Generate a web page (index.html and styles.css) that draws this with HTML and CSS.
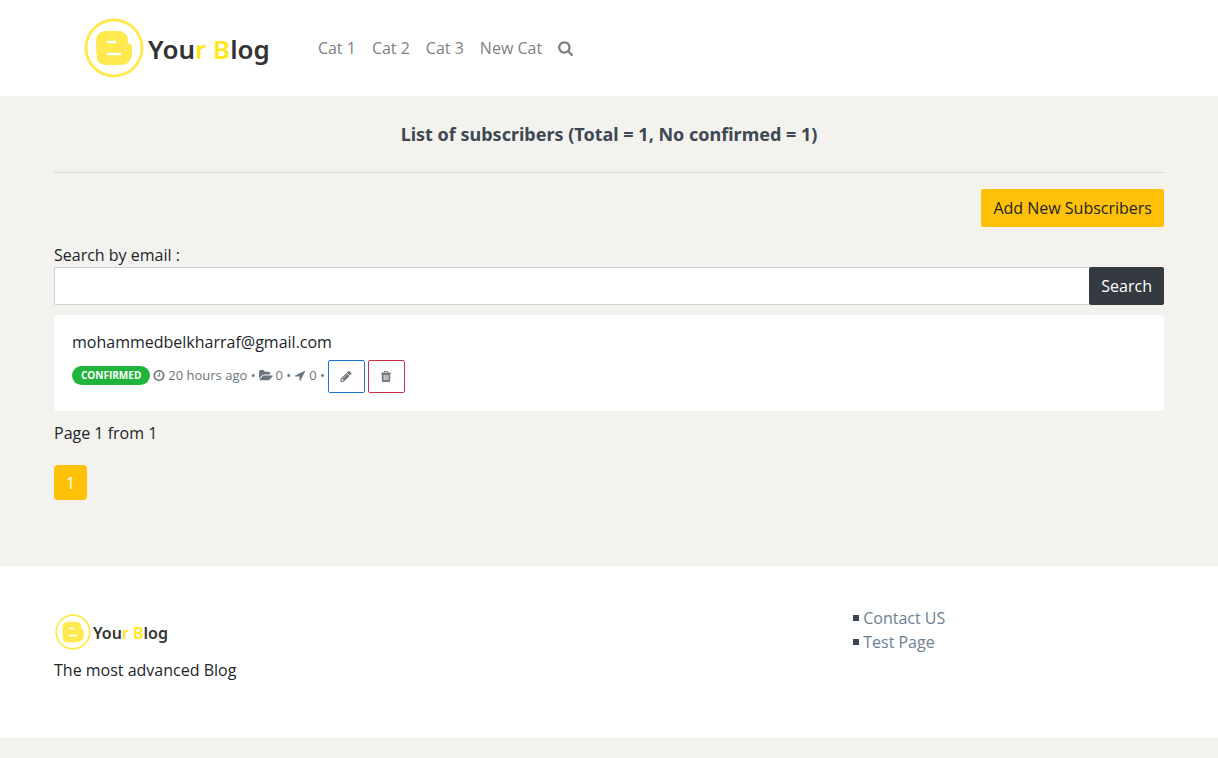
FILE: index.html
```html
<!DOCTYPE html>
<html lang="en">
<head>
    <meta charset="UTF-8">
    <meta name="viewport" content="width=device-width, initial-scale=1.0">
    <title>List of subscribers</title>
    <link rel="stylesheet" href="styles.css">
</head>
<body>
    <header class="header">
        <nav class="container navbar">
            <a class="logo" href="#">
                <svg class="logo-icon" viewBox="0 0 60 60" aria-hidden="true">
                    <circle cx="30" cy="30" r="28" fill="none" stroke="#ffe94f" stroke-width="3"/>
                    <path d="M23 13h11q10 0 10 10 0 3 2 3 2 0 2 3v6q0 12-12 12H23q-10 0-10-7v-2l-1-5q1-3 0-6V24q0-11 11-11z" fill="#ffe94f"/>
                    <path d="M24 24h7M24 36h12" stroke="#fff" stroke-width="2.500" stroke-linecap="round"/>
                </svg>
                <span class="logo-text">You<span class="accent">r B</span>log</span>
            </a>
            <ul class="nav">
                <li><a href="#">Cat 1</a></li>
                <li><a href="#">Cat 2</a></li>
                <li><a href="#">Cat 3</a></li>
                <li><a href="#">New Cat</a></li>
                <li>
                    <a href="#" aria-label="Search">
                        <svg class="icon-search" viewBox="0 0 1664 1792" aria-hidden="true"><path d="M1152 832q0-185-131.500-316.500T704 384 387.500 515.500 256 832t131.500 316.500T704 1280t316.500-131.500T1152 832zm512 832q0 52-38 90t-90 38q-54 0-90-38l-343-342q-179 124-399 124-143 0-273.500-55.500t-225-150-150-225T0 832t55.500-273.500 150-225 225-150T704 128t273.500 55.500 225 150 150 225T1408 832q0 220-124 399l343 343q37 37 37 90z"/></svg>
                    </a>
                </li>
            </ul>
        </nav>
    </header>

    <main class="container main">
        <h1>List of subscribers (Total = 1, No confirmed = 1)</h1>
        <hr>
        <div class="actions">
            <button class="btn btn-warning" type="button">Add New Subscribers</button>
        </div>
        <form>
            <label for="email">Search by email :</label>
            <div class="input-group">
                <input type="text" id="email" name="email">
                <button class="btn btn-dark" type="submit">Search</button>
            </div>
        </form>

        <div class="card">
            <div class="email">mohammedbelkharraf@gmail.com</div>
            <div class="meta">
                <span class="badge">CONFIRMED</span>
                <svg class="icon" viewBox="0 0 1536 1792" aria-hidden="true"><path d="M896 544v448q0 14-9 23t-23 9H544q-14 0-23-9t-9-23v-64q0-14 9-23t23-9h224V544q0-14 9-23t23-9h64q14 0 23 9t9 23zm416 352q0-148-73-273t-198-198-273-73-273 73-198 198-73 273 73 273 198 198 273 73 273-73 198-198 73-273zm224 0q0 209-103 385.500T1153.500 1561 768 1664t-385.500-103T103 1281.500 0 896t103-385.500T382.500 231 768 128t385.500 103T1433 510.500 1536 896z"/></svg>
                <span>20 hours ago •</span>
                <svg class="icon icon-wide" viewBox="0 0 1920 1792" aria-hidden="true"><path d="M1879 952q0 31-31 66l-336 396q-43 51-120.500 86.500T1248 1536H160q-34 0-60.500-13T73 1480q0-31 31-66l336-396q43-51 120.500-86.500T704 896h1088q34 0 60.500 13t26.500 43zm-343-344v160H704q-94 0-197 47.500T343 935L6 1331l-5 6q0-4-.5-12.500T0 1312V352q0-92 66-158t158-66h320q92 0 158 66t66 158v32h544q92 0 158 66t66 158z"/></svg>
                <span>0 •</span>
                <svg class="icon" viewBox="0 0 1408 1792" aria-hidden="true"><path d="M1401 349l-640 1280q-17 35-57 35-5 0-15-2-22-5-35.500-22.500T640 1600v-576H64q-22 0-39.500-13.500T2 975t4-42 29-30L1315 263q13-7 29-7 27 0 45 19 15 14 18.500 34.500T1401 349z"/></svg>
                <span>0 •</span>
                <button class="btn-outline edit" type="button" aria-label="Edit">
                    <svg class="icon" viewBox="0 0 1536 1792" aria-hidden="true"><path d="M363 1536l91-91-235-235-91 91v107h128v128h107zm523-928q0-22-22-22-10 0-17 7l-542 542q-7 7-7 17 0 22 22 22 10 0 17-7l542-542q7-7 7-17zm-54-192l416 416-832 832H0v-416zm683 96q0 53-37 90l-166 166-416-416 166-165q36-38 90-38 53 0 91 38l235 234q37 39 37 91z"/></svg>
                </button>
                <button class="btn-outline delete" type="button" aria-label="Delete">
                    <svg class="icon" viewBox="0 0 1408 1792" aria-hidden="true"><path fill-rule="evenodd" d="M512 1376V672q0-32-32-32h-64q-32 0-32 32v704q0 32 32 32h64q32 0 32-32zm256 0V672q0-32-32-32h-64q-32 0-32 32v704q0 32 32 32h64q32 0 32-32zm256 0V672q0-32-32-32h-64q-32 0-32 32v704q0 32 32 32h64q32 0 32-32zM480 384h448l-48-117q-7-9-17-11H546q-10 2-17 11zm928 32v64q0 32-32 32h-96v948q0 83-47 143.500t-113 60.500H288q-66 0-113-58.500T128 1464V512H32q-32 0-32-32v-64q0-32 32-32h309l70-167q15-37 54-63t79-26h320q40 0 79 26t54 63l70 167h309q32 0 32 32z"/></svg>
                </button>
            </div>
        </div>

        <p class="page-info">Page 1 from 1</p>
        <a class="page-link" href="#">1</a>
    </main>

    <footer class="footer">
        <div class="container footer-row">
            <div class="footer-about">
                <a class="logo logo-small" href="#">
                    <svg class="logo-icon" viewBox="0 0 60 60" aria-hidden="true">
                        <circle cx="30" cy="30" r="28" fill="none" stroke="#ffe94f" stroke-width="3"/>
                        <path d="M23 13h11q10 0 10 10 0 3 2 3 2 0 2 3v6q0 12-12 12H23q-10 0-10-7v-2l-1-5q1-3 0-6V24q0-11 11-11z" fill="#ffe94f"/>
                        <path d="M24 24h7M24 36h12" stroke="#fff" stroke-width="2.500" stroke-linecap="round"/>
                    </svg>
                    <span class="logo-text">You<span class="accent">r B</span>log</span>
                </a>
                <p>The most advanced Blog</p>
            </div>
            <ul class="footer-links">
                <li><a href="#">Contact US</a></li>
                <li><a href="#">Test Page</a></li>
            </ul>
        </div>
    </footer>
</body>
</html>
```

FILE: styles.css
```css
* {
    box-sizing: border-box;
}
body {
    margin: 0;
    background-color: #f3f2ee;
    color: #212529;
    font-family: "Open Sans", "Noto Sans", sans-serif;
    font-size: 16px;
    line-height: 24px;
}
a {
    text-decoration: none;
}
ul {
    list-style: none;
    margin: 0;
    padding: 0;
}
svg {
    fill: currentColor;
}
.container {
    width: 100%;
    max-width: 1140px;
    margin: 0 auto;
    padding: 0 15px;
}
.header {
    background-color: #fff;
}
.navbar {
    display: flex;
    align-items: center;
    gap: 48px;
    height: 96px;
    padding: 0 45px;
}
.logo {
    display: flex;
    align-items: center;
    gap: 4px;
    color: #333;
}
.logo-icon {
    width: 60px;
    height: 60px;
}
.logo-text {
    padding-top: 2px;
    font-family: "Noto Sans", sans-serif;
    font-size: 26px;
    font-weight: 600;
    line-height: 36px;
}
.accent {
    color: #ffe71a;
}
.nav {
    display: flex;
    align-items: center;
    gap: 16px;
}
.nav a {
    color: #7f7f7f;
}
.icon-search {
    display: block;
    width: 15px;
    height: 16px;
}
.main {
    padding-bottom: 66px;
}
h1 {
    margin: 0;
    padding: 24px 0 23px;
    color: #3d4852;
    font-family: "Noto Sans", sans-serif;
    font-size: 18px;
    font-weight: 700;
    line-height: 29px;
    text-align: center;
}
hr {
    margin: 0 0 16px;
    border: 0;
    border-top: 1px solid #dad9d6;
}
.actions {
    display: flex;
    justify-content: flex-end;
    margin-bottom: 16px;
}
.btn {
    height: 38px;
    padding: 0 12px;
    border: 0;
    border-radius: 2px;
    font: inherit;
    cursor: pointer;
}
.btn-warning {
    background-color: #ffc107;
    color: #212529;
}
.btn-dark {
    background-color: #343a40;
    color: #fff;
}
label {
    display: block;
}
.input-group {
    display: flex;
}
.input-group input {
    flex: 1;
    min-width: 0;
    height: 38px;
    padding: 6px 12px;
    border: 1px solid #ced4da;
    border-right: 0;
    border-radius: 2px 0 0 2px;
    font: inherit;
}
.card {
    margin: 10px 0;
    padding: 15px 18px 18px;
    border-radius: 4px;
    background-color: #fff;
}
.meta {
    display: flex;
    align-items: center;
    gap: 3px;
    margin-top: 6px;
    color: #6c757d;
    font-size: 13px;
}
.meta > span,
.meta > svg {
    margin-bottom: 3px;
}
.badge {
    padding: 0 9px;
    border-radius: 10px;
    background-color: #21b43c;
    color: #fff;
    font-size: 10px;
    font-weight: 700;
    line-height: 19px;
}
.icon {
    width: 12px;
    height: 13px;
}
.icon-wide {
    width: 14px;
}
.btn-outline {
    display: flex;
    align-items: center;
    justify-content: center;
    width: 37px;
    height: 33px;
    padding: 0;
    border: 1px solid;
    border-radius: 2px;
    background-color: #fff;
    cursor: pointer;
}
.btn-outline .icon {
    color: #6c757d;
}
.edit {
    border-color: #1976d2;
}
.delete {
    border-color: #c9304c;
}
.page-info {
    margin: 0 0 20px;
}
.page-link {
    display: inline-block;
    padding: 6px 12px 5px;
    border-radius: 4px;
    background-color: #ffc107;
    color: #fff;
}
.footer {
    margin-bottom: 20px;
    padding: 40px 0 56px;
    background-color: #fff;
}
.footer-row {
    display: flex;
}
.footer-about {
    flex: 1;
}
.footer-about p {
    margin: 0;
}
.logo-small {
    gap: 2px;
    height: 52px;
    padding-left: 1px;
}
.logo-small .logo-icon {
    width: 36px;
    height: 36px;
}
.logo-small .logo-text {
    font-size: 16px;
    line-height: 24px;
}
.footer-links {
    width: 28%;
}
.footer-links li {
    display: flex;
    align-items: center;
    gap: 4px;
}
.footer-links li::before {
    content: "";
    width: 6px;
    height: 6px;
    background-color: #3d4852;
}
.footer-links a {
    color: #6c7f93;
}
```
